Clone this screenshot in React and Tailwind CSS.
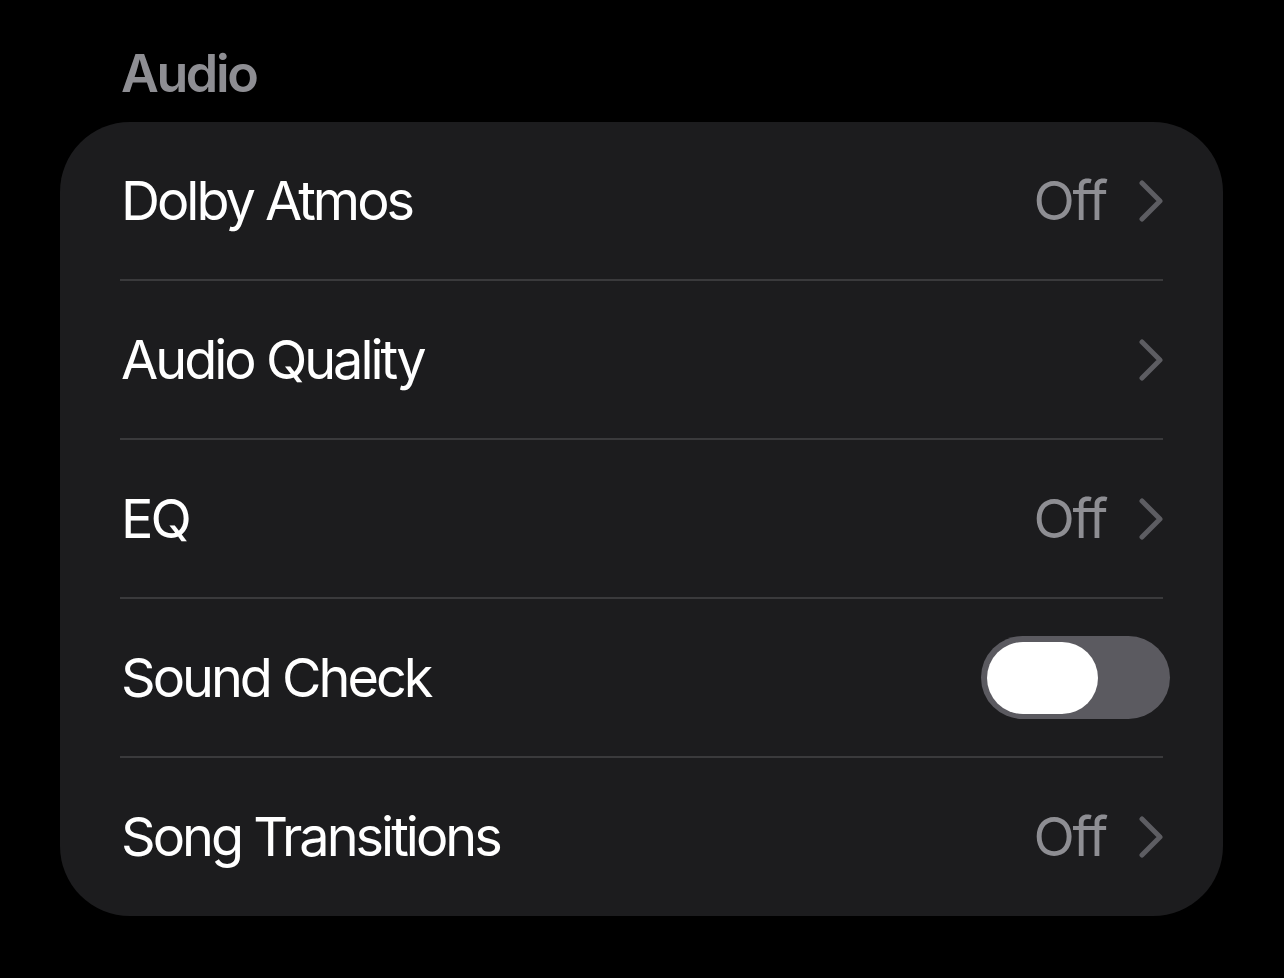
import React, { useState } from 'react';

const rows = [
  { label: 'Dolby Atmos', value: 'Off', type: 'link' },
  { label: 'Audio Quality', value: '', type: 'link' },
  { label: 'EQ', value: 'Off', type: 'link' },
  { label: 'Sound Check', type: 'toggle' },
  { label: 'Song Transitions', value: 'Off', type: 'link' },
];

const Chevron = () => (
  <svg width="24" height="42" viewBox="0 0 24 42" fill="none" className="shrink-0">
    <polyline points="3,3 21,21 3,39" stroke="#5d5d62" strokeWidth="5" strokeLinecap="round" strokeLinejoin="round" />
  </svg>
);

const Toggle = ({ on, onChange }) => (
  <button
    onClick={onChange}
    className="w-[189px] h-[83px] rounded-full bg-[#5b5a60] p-[6px] flex items-center -mr-[7px]"
  >
    <span className="block w-[111px] h-[72px] rounded-full bg-white" />
  </button>
);

const App = () => {
  const [soundCheck, setSoundCheck] = useState(false);

  return (
    <div className="min-h-[978px] bg-black text-white" style={{ fontFamily: 'Inter, "Noto Sans", sans-serif' }}>
      {/* section header */}
      <div className="pl-[121px] pt-[48px] pb-[22px]">
        <h2 className="text-[52px] leading-none font-semibold text-[#8e8e93] tracking-[-2.4px]">Audio</h2>
      </div>

      {/* settings card */}
      <div className="ml-[60px] w-[1163px] bg-[#1c1c1e] rounded-[70px] px-[60px]">
        {rows.map((row, i) => (
          <div
            key={row.label}
            className={`flex items-center justify-between ${i < rows.length - 1 ? 'border-b-2 border-[#3a3a3c] h-[159px]' : 'h-[158px]'}`}
          >
            <span className="text-[54px] leading-none pl-[1px] tracking-[-3px]">{row.label}</span>
            {row.type === 'toggle' ? (
              <Toggle on={soundCheck} onChange={() => setSoundCheck(!soundCheck)} />
            ) : (
              <div className="flex items-center gap-[33px]">
                {row.value && <span className="text-[54px] leading-none text-[#8e8e93] tracking-[-2.2px]">{row.value}</span>}
                <Chevron />
              </div>
            )}
          </div>
        ))}
      </div>
    </div>
  );
};

export default App;
